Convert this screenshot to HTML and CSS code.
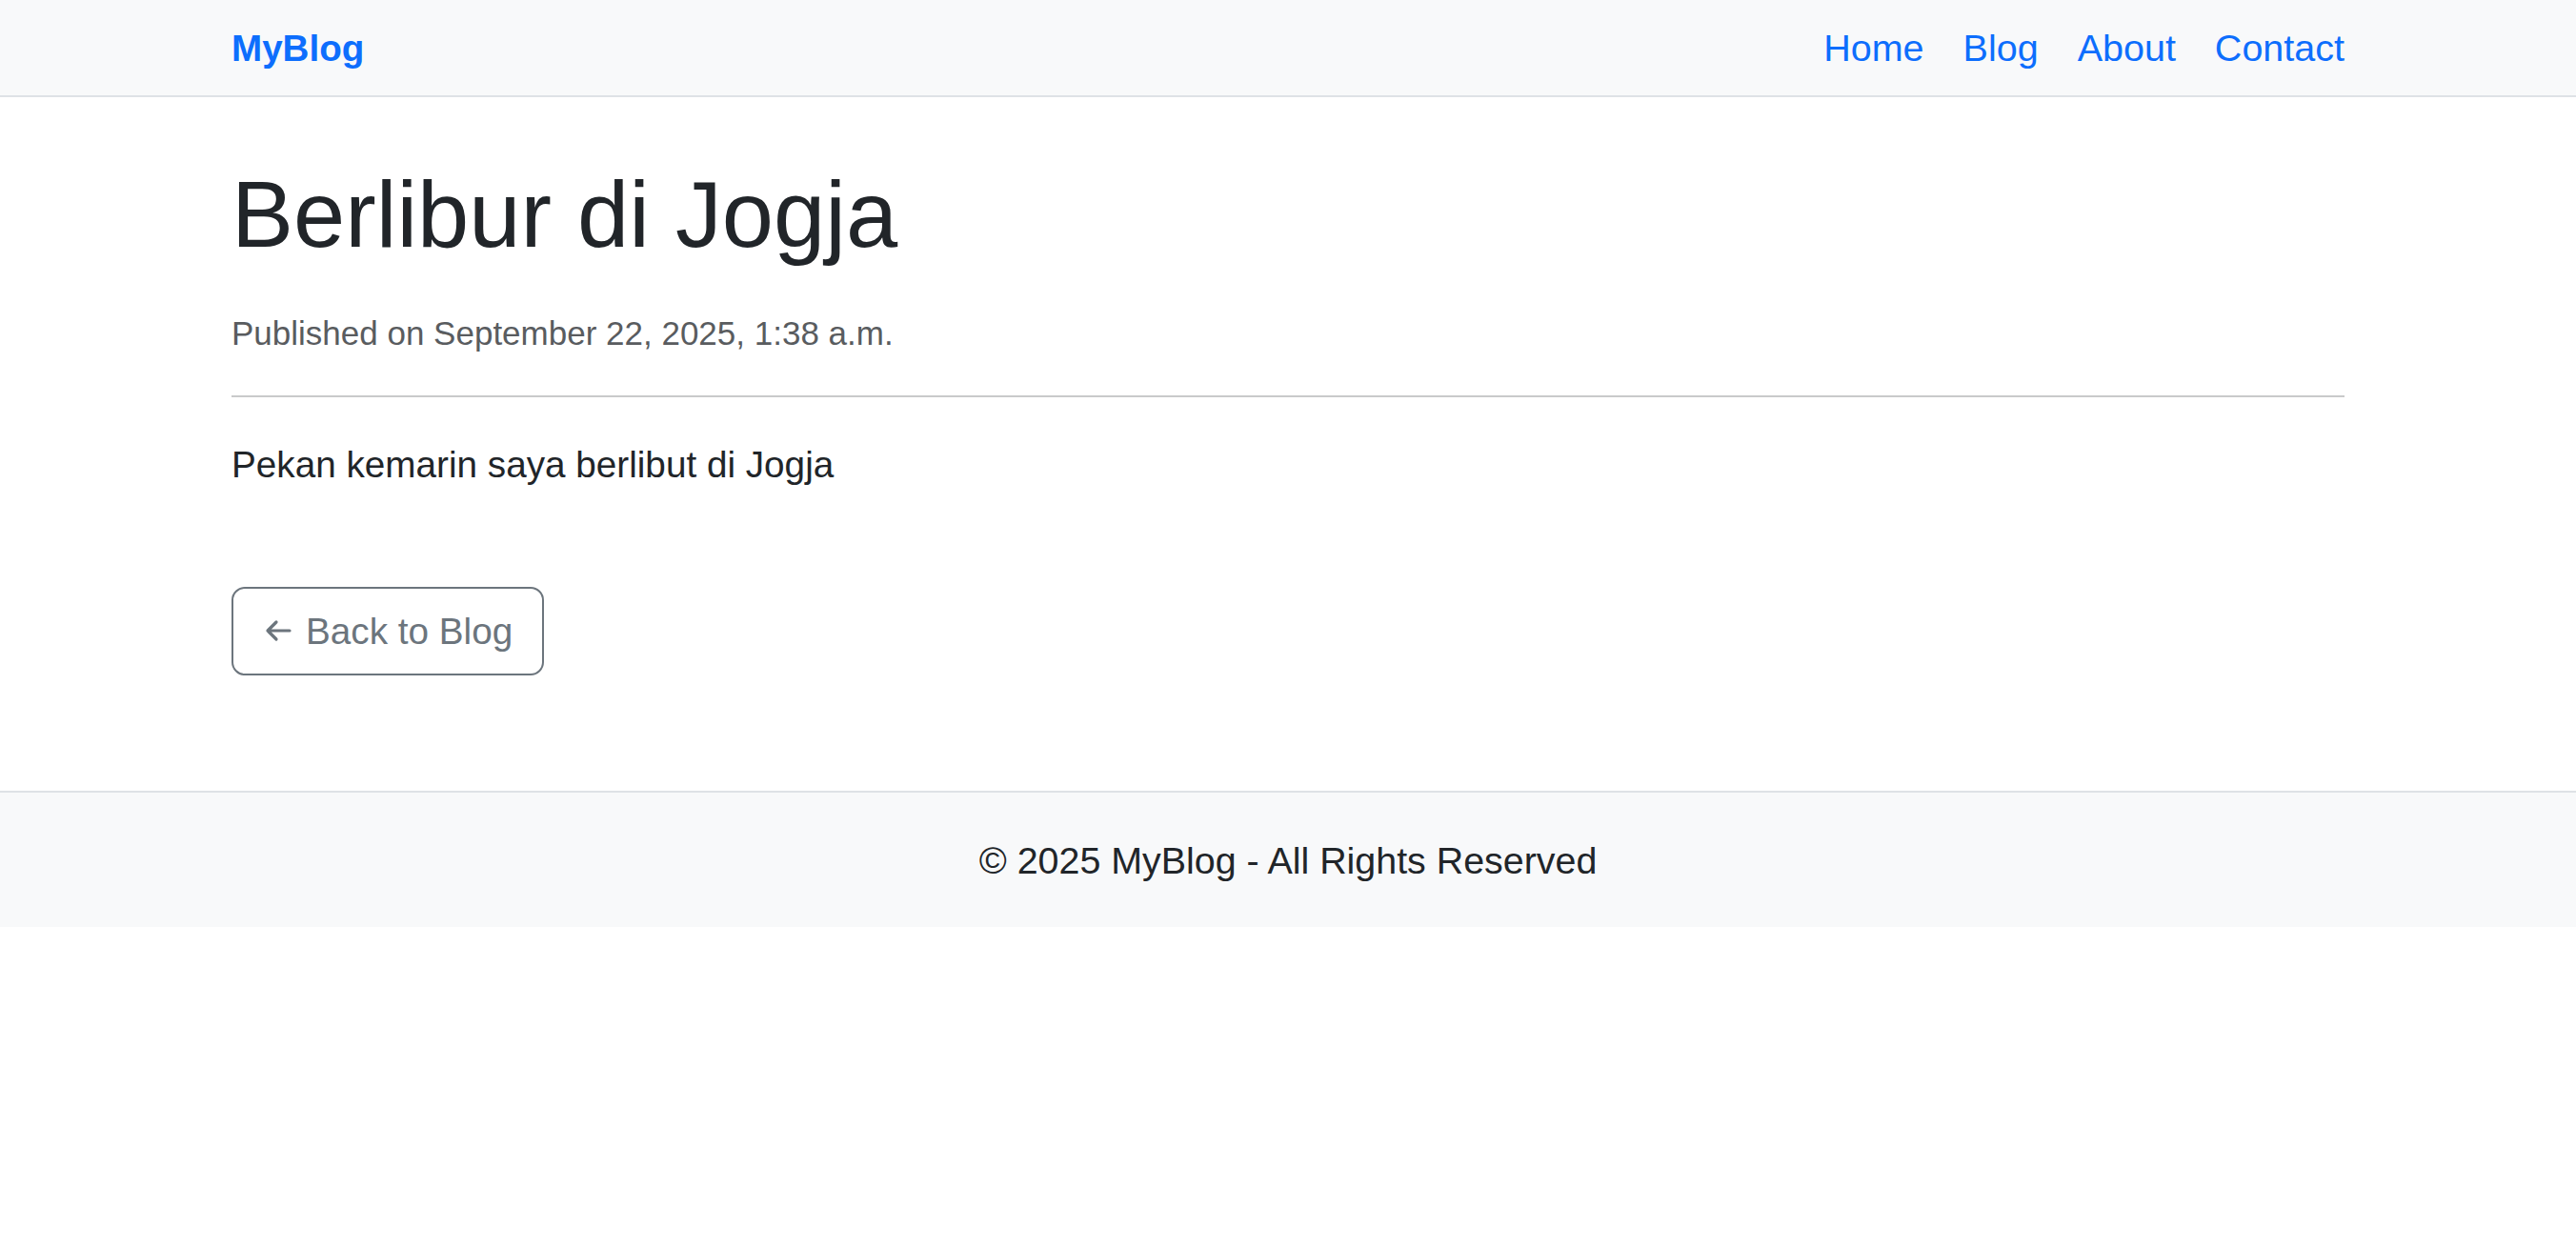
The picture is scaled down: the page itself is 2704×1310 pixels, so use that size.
FILE: index.html
```html
<!DOCTYPE html>
<html lang="en">
<head>
<meta charset="utf-8">
<title>Berlibur di Jogja - MyBlog</title>
<link rel="stylesheet" href="styles.css">
</head>
<body>
<nav class="navbar">
  <div class="container navbar-inner">
    <a class="brand" href="#">MyBlog</a>
    <ul class="nav">
      <li><a class="nav-link" href="#">Home</a></li>
      <li><a class="nav-link" href="#">Blog</a></li>
      <li><a class="nav-link" href="#">About</a></li>
      <li><a class="nav-link" href="#">Contact</a></li>
    </ul>
  </div>
</nav>

<main class="container post">
  <h1 class="post-title">Berlibur di Jogja</h1>
  <p class="post-meta">Published on September 22, 2025, 1:38 a.m.</p>
  <hr class="divider">
  <div class="post-body">
    <p>Pekan kemarin saya berlibut di Jogja</p>
  </div>
  <a class="btn-back" href="#">
    <svg class="arrow" width="28" height="24" viewBox="0 0 28 24" aria-hidden="true">
      <path d="M26 12 H3 M12 3 L3 12 L12 21" fill="none" stroke="currentColor" stroke-width="3.2" stroke-linecap="round" stroke-linejoin="round"/>
    </svg>
    <span>Back to Blog</span>
  </a>
</main>

<footer class="footer">
  <p class="footer-text">© 2025 MyBlog - All Rights Reserved</p>
</footer>
</body>
</html>
```

FILE: styles.css
```css
* {
  box-sizing: border-box;
}

html, body {
  margin: 0;
  padding: 0;
  background: #ffffff;
}

body {
  font-family: "Liberation Sans", Arial, sans-serif;
  font-size: 38.7px;
  line-height: 1.5;
  color: #212529;
}

.container {
  width: 2218px;
  margin-left: auto;
  margin-right: auto;
}

/* Navbar */
.navbar {
  background: #f8f9fa;
  border-bottom: 2px solid #dee2e6;
}

.navbar-inner {
  height: 100px;
  display: flex;
  align-items: center;
  justify-content: space-between;
  padding-top: 2px;
}

.brand {
  font-size: 38.6px;
  font-weight: 700;
  color: #0d6efd;
  text-decoration: none;
  line-height: 1.5;
}

.nav {
  list-style: none;
  margin: 0;
  padding: 0;
  display: flex;
  gap: 41px;
}

.nav-link {
  font-size: 39.5px;
  color: #0d6efd;
  text-decoration: none;
  line-height: 1.5;
}

/* Post */
.post {
  padding-top: 65px;
  padding-bottom: 121px;
}

.post-title {
  margin: 0;
  font-size: 97.5px;
  font-weight: 500;
  line-height: 1.2;
  color: #212529;
}

.post-meta {
  margin: 39.5px 0 0;
  font-size: 35px;
  line-height: 1.5;
  color: #595c5f;
}

.divider {
  margin: 38.5px 0 0;
  border: 0;
  border-top: 2px solid #c9cacb;
  height: 0;
}

.post-body {
  margin-top: 42px;
}

.post-body p {
  margin: 0;
}

.btn-back {
  margin-top: 99px;
  display: inline-flex;
  align-items: center;
  gap: 15px;
  padding: 16px 31px 16px 33px;
  border: 2px solid #6c757d;
  border-radius: 14px;
  color: #6c757d;
  text-decoration: none;
  font-size: 38.7px;
  line-height: 57px;
}

.arrow {
  display: block;
  flex: none;
}

/* Footer */
.footer {
  background: #f8f9fa;
  border-top: 2px solid #dee2e6;
  padding: 42px 0 40px;
}

.footer-text {
  margin: 0;
  text-align: center;
  font-size: 39.4px;
  line-height: 1.5;
  color: #212529;
}
```
